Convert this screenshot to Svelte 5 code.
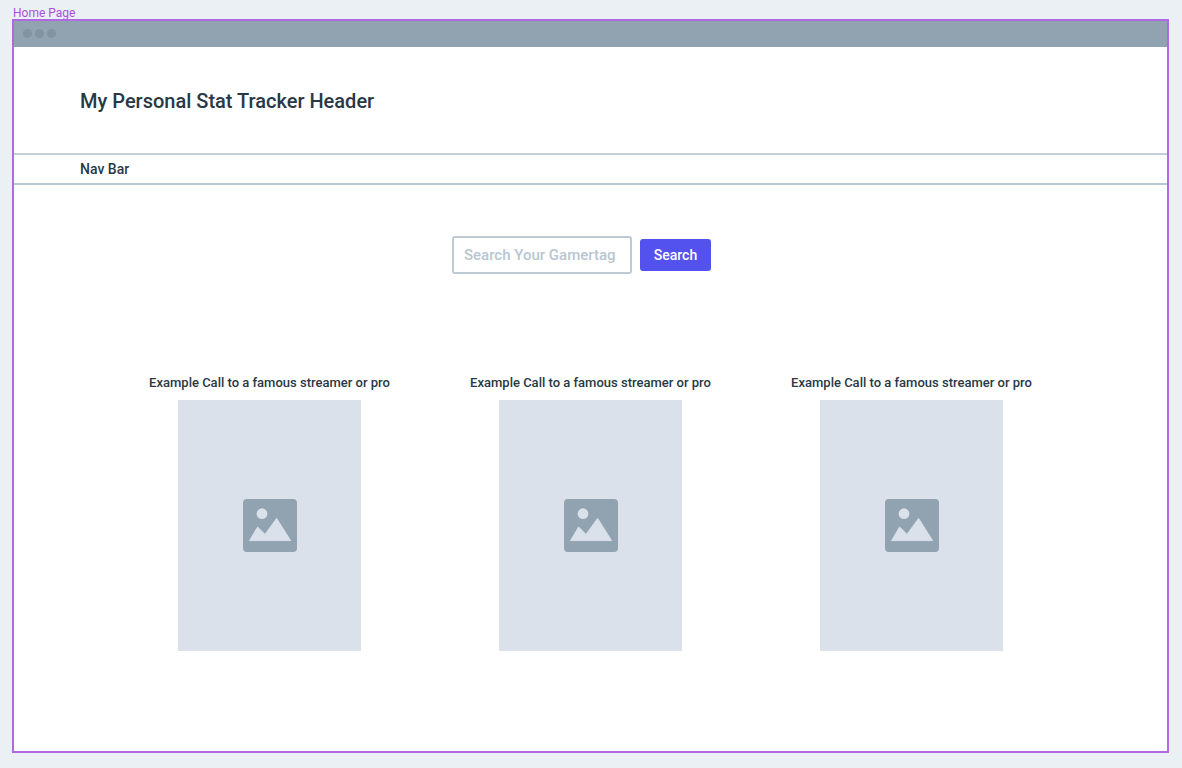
<script>
  const examples = [1, 2, 3];
  const caption = 'Example Call to a famous streamer or pro';
  let gamertag = $state('');
</script>

<div class="board">
  <div class="label">Home Page</div>
  <div class="frame">
    <div class="titlebar">
      <span class="dot"></span><span class="dot"></span><span class="dot"></span>
    </div>
    <header><h1>My Personal Stat Tracker Header</h1></header>
    <nav>Nav Bar</nav>
    <main>
      <form class="search" onsubmit={(e) => e.preventDefault()}>
        <input type="text" aria-label="Search Your Gamertag" placeholder="Search Your Gamertag" bind:value={gamertag} />
        <button type="submit">Search</button>
      </form>
      <section class="examples">
        {#each examples as id (id)}
          <figure>
            <figcaption>{caption}</figcaption>
            <div class="image">
              <svg width="54" height="54" viewBox="0 0 54 54" aria-hidden="true">
                <rect width="54" height="53" rx="4" fill="#91a2b0" />
                <circle cx="19" cy="14.7" r="5.4" fill="#dae1ea" />
                <path d="M6.6 41.6 14.6 28 22 35.4 33.6 19.4 47.6 41.6Z" fill="#dae1ea" stroke="#dae1ea" stroke-width="1" stroke-linejoin="round" />
              </svg>
            </div>
          </figure>
        {/each}
      </section>
    </main>
  </div>
</div>

<style>
  :global(body) {
    margin: 0;
    background: #ebf0f5;
  }
  .board {
    box-sizing: border-box;
    min-height: 100vh;
    padding: 7px 13px 15px 12px;
    display: flex;
    flex-direction: column;
    font-family: Roboto, "Liberation Sans", sans-serif;
    color: #293845;
    font-weight: 500;
  }
  .label {
    padding-left: 1px;
    font-size: 12px;
    line-height: 12px;
    font-weight: 400;
    color: #a94fdd;
  }
  .frame {
    flex: 1;
    display: flex;
    flex-direction: column;
    border: 2px solid #b069e3;
    background: #fff;
  }
  .titlebar {
    box-sizing: border-box;
    display: flex;
    align-items: center;
    gap: 3px;
    height: 26px;
    padding: 0 9px 2px;
    background: #91a2b0;
  }
  .dot {
    width: 9px;
    height: 9px;
    border-radius: 50%;
    background: #8194a2;
  }
  header {
    padding: 40px 66px 38px;
  }
  h1 {
    margin: 0;
    font-size: 20px;
    line-height: 28px;
    font-weight: 500;
  }
  nav {
    padding: 0 66px;
    border-top: 2px solid #c3cfd9;
    border-bottom: 2px solid #b8c8d2;
    font-size: 14px;
    line-height: 28px;
  }
  main {
    padding: 51px 16px 0;
  }
  .search {
    display: flex;
    justify-content: center;
    align-items: center;
    gap: 8px;
    padding-right: 18px;
  }
  input {
    box-sizing: border-box;
    width: 180px;
    height: 38px;
    padding: 0 10px;
    border: 2px solid #bdc9d3;
    border-radius: 3px;
    background: #fff;
    color: #293845;
    font: 500 15px Roboto, "Liberation Sans", sans-serif;
  }
  input::placeholder {
    color: #b8c6d1;
    opacity: 1;
  }
  button {
    width: 71px;
    height: 32px;
    padding: 0;
    border: 0;
    border-radius: 3px;
    background: #5352ee;
    color: #fff;
    font: 500 14px Roboto, "Liberation Sans", sans-serif;
  }
  .examples {
    display: grid;
    grid-template-columns: repeat(3, 1fr);
    max-width: 963px;
    margin: 98px auto 0;
  }
  figure {
    display: flex;
    flex-direction: column;
    align-items: center;
    gap: 6px;
    margin: 0;
  }
  figcaption {
    font-size: 13px;
    line-height: 22px;
  }
  .image {
    display: flex;
    align-items: center;
    justify-content: center;
    width: 183px;
    height: 251px;
    background: #dae1ea;
  }
</style>
